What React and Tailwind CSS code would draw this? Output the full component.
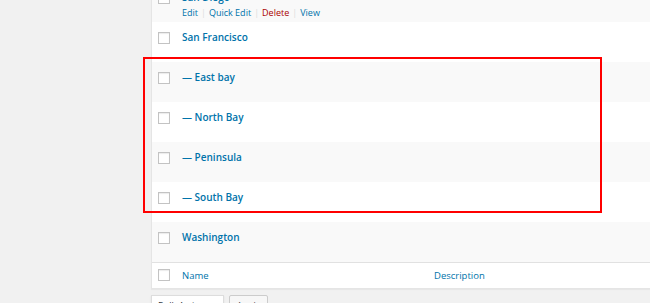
import React from 'react';

const rows = [
  { name: 'San Francisco', child: false },
  { name: 'East bay', child: true },
  { name: 'North Bay', child: true },
  { name: 'Peninsula', child: true },
  { name: 'South Bay', child: true },
  { name: 'Washington', child: false },
];

const Checkbox = ({ className = '' }) => (
  <span
    className={`block w-[12px] h-[12px] border border-[#c3c3c3] bg-white shadow-[inset_0_1px_1px_rgba(0,0,0,0.08)] ${className}`}
  />
);

const Sep = () => <span className="mx-[3px] text-[#dddddd]">|</span>;

const RowActions = ({ hidden }) => (
  <div className={`leading-[15px] text-[9px] whitespace-nowrap ${hidden ? 'invisible' : ''}`}>
    <span className="text-[#0073aa]">Edit</span>
    <Sep />
    <span className="text-[#0073aa]">Quick Edit</span>
    <Sep />
    <span className="text-[#aa0000]">Delete</span>
    <Sep />
    <span className="text-[#0073aa]">View</span>
  </div>
);

const Row = ({ name, child, striped, showActions }) => (
  <div className={`flex h-[40px] ${striped ? 'bg-[#f9f9f9]' : 'bg-white'}`}>
    <div className="w-[30px] shrink-0 pl-[6px]">
      <Checkbox className="mt-[10px]" />
    </div>
    <div className="w-[252px] shrink-0 pt-[8px]">
      <div className="leading-[15px] text-[10px] font-semibold text-[#0073aa] whitespace-nowrap">
        {child ? '— ' : ''}
        {name}
      </div>
      <RowActions hidden={!showActions} />
    </div>
    <div className="flex-1" />
  </div>
);

const App = () => {
  return (
    <div
      className="relative w-[650px] h-[303px] overflow-hidden bg-[#f1f1f1]"
      style={{ fontFamily: '"Open Sans", "Noto Sans", sans-serif' }}
    >
      {/* Terms table */}
      <div className="ml-[151px] mt-[-18px] w-[520px] bg-white border border-t-0 border-r-0 border-[#e5e5e5] shadow-[0_1px_1px_rgba(0,0,0,0.04)]">
        <Row name="San Diego" striped showActions />
        {rows.map((row, index) => (
          <Row key={row.name} name={row.name} child={row.child} striped={index % 2 === 1} />
        ))}
        <div className="flex h-[26px] border-t border-[#e1e1e1] bg-white">
          <div className="w-[30px] shrink-0 pl-[6px]">
            <Checkbox className="mt-[6px]" />
          </div>
          <div className="w-[252px] shrink-0 pt-[5px] leading-[15px] text-[9.5px] text-[#0073aa]">Name</div>
          <div className="pt-[5px] leading-[15px] text-[9.5px] text-[#0073aa]">Description</div>
        </div>
      </div>

      {/* Bulk actions */}
      <div className="flex gap-[5px] ml-[151px] mt-[6px]">
        <div className="flex items-center justify-between w-[73px] h-[22px] px-[6px] border border-[#dddddd] bg-white text-[9px] text-[#32373c] whitespace-nowrap shadow-[0_1px_2px_rgba(0,0,0,0.07)]">
          <span>Bulk Actions</span>
          <span className="text-[6px] text-[#555]">▼</span>
        </div>
        <div className="flex items-center justify-center w-[39px] h-[22px] border border-[#cccccc] bg-[#f7f7f7] text-[9px] text-[#555] rounded-[2px]">
          Apply
        </div>
      </div>

      {/* Highlight box */}
      <div className="absolute left-[143px] top-[57px] w-[459px] h-[156px] border-2 border-[#ff0000]" />
    </div>
  );
};

export default App;
